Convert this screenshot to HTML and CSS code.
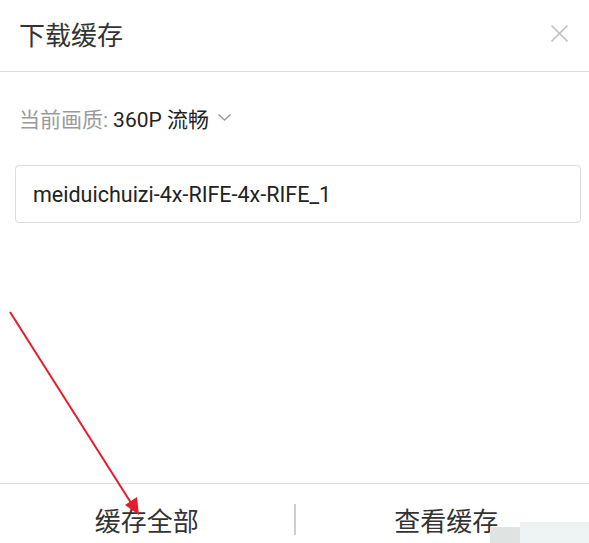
FILE: index.html
```html
<!DOCTYPE html>
<html lang="zh-CN">
<head>
<meta charset="utf-8">
<title>下载缓存</title>
<link rel="stylesheet" href="styles.css">
</head>
<body>
<div class="page">
  <header class="header">
    <h1 class="title">下载缓存</h1>
    <svg class="close" width="17" height="17" viewBox="0 0 17 17" aria-hidden="true">
      <path d="M0.5 0.5 L16.5 16.5 M16.5 0.5 L0.5 16.5" stroke="#c4c4c4" stroke-width="1.6" fill="none"/>
    </svg>
  </header>
  <main class="content">
    <div class="quality">
      <span class="label">当前画质:</span>
      <span class="value">360P 流畅</span>
      <svg class="chev" width="13" height="7" viewBox="0 0 13 7" aria-hidden="true">
        <path d="M0.5 0.5 L6.5 6 L12.5 0.5" stroke="#9a9a9a" stroke-width="1.4" fill="none"/>
      </svg>
    </div>
    <div class="input">meiduichuizi-4x-RIFE-4x-RIFE_1</div>
  </main>
  <footer class="footer">
    <div class="btn">缓存全部</div>
    <div class="divider"></div>
    <div class="btn btn-right">查看缓存</div>
  </footer>
  <div class="wm wm-a"></div>
  <div class="wm wm-b"></div>
  <svg class="arrow" width="589" height="543" viewBox="0 0 589 543" aria-hidden="true">
    <line x1="10" y1="312" x2="133" y2="506" stroke="#e41d2b" stroke-width="2"/>
    <polygon points="139,515 137,497 125,505" fill="#e41d2b"/>
  </svg>
</div>
</body>
</html>
```

FILE: styles.css
```css
* { box-sizing: border-box; }
html, body {
  margin: 0;
  padding: 0;
  background: #ffffff;
}
body {
  font-family: Roboto, "Noto Sans CJK SC", "Noto Sans", sans-serif;
  color: #222;
}
.page {
  position: relative;
  width: 589px;
  height: 543px;
  overflow: hidden;
  display: flex;
  flex-direction: column;
}
.header {
  height: 72px;
  flex: none;
  display: flex;
  align-items: center;
  justify-content: space-between;
  padding: 0 21px 4px 19px;
  border-bottom: 1px solid #dcdcdc;
}
.title {
  margin: 0;
  font-size: 26px;
  font-weight: 400;
  line-height: 34px;
  color: #333;
  font-family: "Noto Sans CJK SC", sans-serif;
}
.close { display: block; }
.content {
  flex: 1;
  padding: 31px 8px 0 15px;
  display: flex;
  flex-direction: column;
}
.quality {
  display: flex;
  align-items: center;
  height: 30px;
  padding-left: 4px;
  font-size: 21px;
  font-family: Roboto, "Noto Sans CJK SC", sans-serif;
}
.label { color: #9a9a9a; }
.value { color: #222; margin-left: 5px; }
.chev { margin-left: 9px; margin-top: -2px; }
.input {
  margin-top: 32px;
  height: 58px;
  border: 1px solid #dcdcdc;
  border-radius: 4px;
  display: flex;
  align-items: center;
  padding-left: 17px;
  font-size: 21.5px;
  color: #222;
}
.footer {
  height: 60px;
  flex: none;
  border-top: 1px solid #dedede;
  display: flex;
  align-items: flex-start;
}
.btn {
  flex: 1 1 0;
  min-width: 0;
  text-align: center;
  font-size: 26px;
  line-height: 34px;
  margin-top: 19px;
  color: #333;
  font-family: "Noto Sans CJK SC", sans-serif;
}
.btn-right { text-indent: 8px; }
.divider {
  width: 2px;
  height: 31px;
  margin-top: 20px;
  background: #cfcfcf;
}
.wm {
  position: absolute;
}
.wm-a {
  left: 490px;
  top: 527px;
  width: 30px;
  height: 16px;
  background: #dfe4e3;
}
.wm-b {
  left: 520px;
  top: 522px;
  width: 69px;
  height: 21px;
  background: #eef4f3;
}
.arrow {
  position: absolute;
  left: 0;
  top: 0;
  pointer-events: none;
}
```
